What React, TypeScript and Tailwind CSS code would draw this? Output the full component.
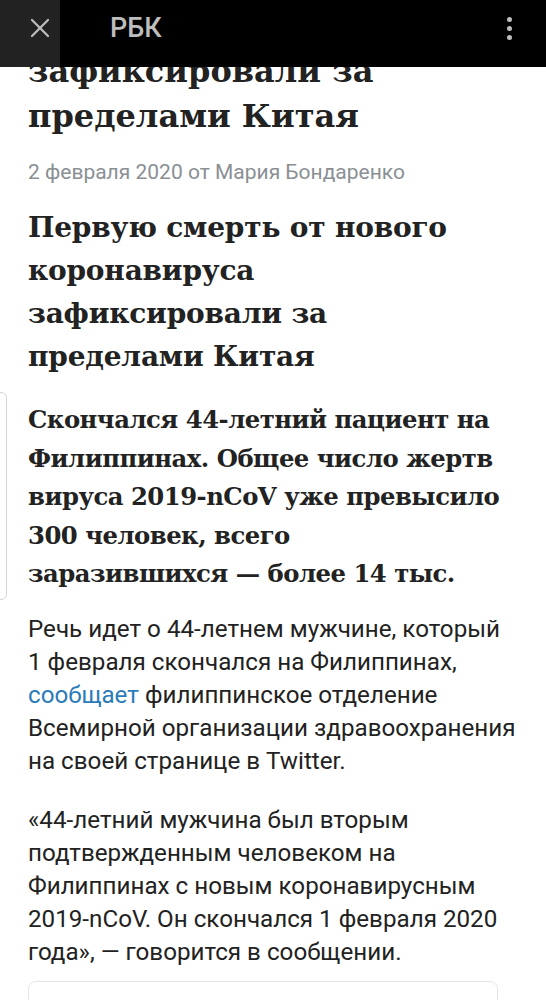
import { X } from 'lucide-react';

const serif = { fontFamily: '"DejaVu Serif", "Liberation Serif", serif' };

export default function App() {
  return (
    <div className="relative w-full h-[1000px] overflow-hidden bg-white" style={{ fontFamily: 'Roboto, "Noto Sans", sans-serif' }}>
      {/* article content */}
      <div className="px-[28px] pt-[49px]">
        <h2 className="text-[32px] leading-[45px] font-bold text-[#222]" style={serif}>
          зафиксировали за
          <br />
          пределами Китая
        </h2>

        <div className="mt-[20px] text-[21px] leading-[26px] text-[#8a8f94]">
          2 февраля 2020 от Мария Бондаренко
        </div>

        <h1 className="mt-[21px] max-w-[480px] text-[28px] leading-[43px] font-bold text-[#222] tracking-[-0.2px]" style={serif}>
          Первую смерть от нового коронавируса зафиксировали за пределами Китая
        </h1>

        <p className="mt-[23px] text-[24.3px] leading-[38.5px] font-bold text-[#222] tracking-[-0.5px]" style={serif}>
          Скончался 44-летний пациент на Филиппинах. Общее число жертв вируса 2019-nCoV уже превысило 300 человек, всего заразившихся&nbsp;— более 14&nbsp;тыс.
        </p>

        <p className="mt-[19px] text-[24.2px] leading-[33px] text-[#222]">
          Речь идет о 44-летнем мужчине, который 1&nbsp;февраля скончался на Филиппинах,{' '}
          <span className="text-[#2b7bb9]">сообщает</span> филиппинское отделение Всемирной организации здравоохранения на своей странице в Twitter.
        </p>

        <p className="mt-[26px] text-[24.2px] leading-[33px] text-[#222]">
          «44-летний мужчина был вторым подтвержденным человеком на Филиппинах с новым коронавирусным 2019-nCoV. Он скончался 1&nbsp;февраля 2020 года»,&nbsp;— говорится в сообщении.
        </p>

        <div className="mt-[12px] w-[470px] h-[60px] rounded-[8px] border border-[#e3e6e8]" />
      </div>

      {/* side widget edge */}
      <div className="absolute left-[-12px] top-[392px] w-[19px] h-[208px] rounded-[6px] border border-[#d4d4d4] bg-white" />

      {/* top bar */}
      <div className="absolute top-0 inset-x-0 h-[67px] bg-black flex items-start">
        <div className="w-[60px] h-full bg-[#222] flex items-start pl-[24px] pt-[12px]">
          <X size={32} strokeWidth={1.7} className="text-[#bdbdbd]" />
        </div>
        <div className="flex-1 h-[57px] flex items-center">
          <div className="ml-[50px] text-[27px] font-medium text-[#bdbdbd]">РБК</div>
          <div className="ml-auto mr-[34px] flex flex-col gap-[4px]">
            <span className="block w-[5px] h-[5px] rounded-full bg-[#bdbdbd]" />
            <span className="block w-[5px] h-[5px] rounded-full bg-[#bdbdbd]" />
            <span className="block w-[5px] h-[5px] rounded-full bg-[#bdbdbd]" />
          </div>
        </div>
      </div>
    </div>
  );
}
